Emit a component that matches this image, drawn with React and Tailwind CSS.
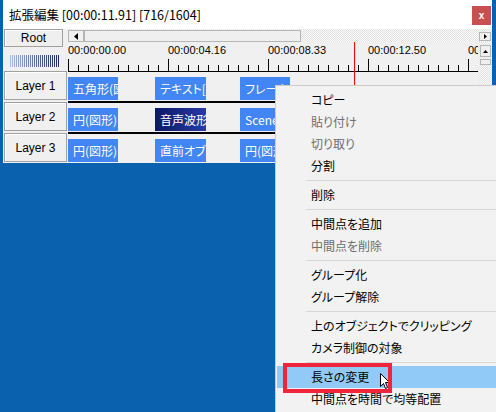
import React from 'react';

const jp = "font-['Noto_Sans_CJK_JP','Noto_Sans',sans-serif] [font-feature-settings:'palt']";
const checker = '[background:repeating-conic-gradient(#e2e2e2_0_25%,#fbfbfb_0_50%)_0_0/2px_2px]';

const layers = [
  ['五角形(図形)', 'テキスト[標準描画]', 'フレームバッファ'],
  ['円(図形)', '音声波形表示', 'Scene'],
  ['円(図形)', '直前オブジェクト', '円(図形)'],
];

const menuItems = [
  { t: 'コピー' },
  { t: '貼り付け', off: true },
  { t: '切り取り', off: true },
  { t: '分割' },
  'sep',
  { t: '削除' },
  'sep',
  { t: '中間点を追加' },
  { t: '中間点を削除', off: true },
  'sep',
  { t: 'グループ化' },
  { t: 'グループ解除' },
  'sep',
  { t: '上のオブジェクトでクリッピング' },
  { t: 'カメラ制御の対象' },
  'sep',
  { t: '長さの変更', hot: true },
  { t: '中間点を時間で均等配置' },
];

const Clip = ({ label, ml, w, selected }) => (
  <div
    className={
      'h-[23px] flex items-center pl-[5px] overflow-hidden whitespace-nowrap text-white text-[12px] ' +
      jp +
      ' ' +
      ml +
      ' ' +
      w +
      ' ' +
      (selected ? 'bg-gradient-to-r from-[#0c1866] to-[#2a3aa6]' : 'bg-[#4285f4]')
    }
  >
    {label}
  </div>
);

const Ruler = () => {
  const ticks = [];
  for (let i = 0; i <= 41; i++) {
    const x = i * 10 + 0.5;
    const major = i % 10 === 0;
    ticks.push(<line key={i} x1={x} x2={x} y1={major ? 0 : 6} y2={12} stroke="#000" strokeWidth="1" />);
  }
  return (
    <svg width="410" height="13" className="block">
      {ticks}
      <line x1="0" x2="410" y1="12.5" y2="12.5" stroke="#000" strokeWidth="1" />
    </svg>
  );
};

const LayerButton = ({ n }) => (
  <div className="ml-[1px] w-[63px] h-[29px] border border-[#a0a0a0] shadow-[inset_1px_1px_0_#fff] bg-[#f0f0f0] flex items-center justify-center text-[12px] text-black font-['Liberation_Sans',sans-serif]">
    Layer {n}
  </div>
);

export default function App() {
  return (
    <div className="relative w-[496px] h-[412px] overflow-hidden bg-[#0a62ae]">
      <div className="ml-[3px] w-[489px] flex flex-col">
        {/* title bar */}
        <div className="h-[29px] bg-white flex items-start justify-between">
          <div className={'mt-[6px] pl-[6px] text-[12.5px] text-black leading-[18px] ' + jp}>
            拡張編集 [00:00:11.91] [716/1604]
          </div>
          <div className="mt-[6px] mr-[1px] w-[19px] h-[19px] bg-[#c75050] flex items-center justify-center text-white text-[10px] font-bold font-['Liberation_Sans',sans-serif] leading-none">
            x
          </div>
        </div>

        {/* body */}
        <div className="h-[134px] bg-[#f0f0f0] flex">
          <div className="w-[65px] flex flex-col">
            <div className="ml-[1px] w-[59px] h-[18px] border border-[#a0a0a0] shadow-[inset_1px_1px_0_#fff] bg-[#efefef] flex items-center justify-center text-[12px] text-black font-['Liberation_Sans',sans-serif]">
              Root
            </div>
            <div className="mt-[8px] ml-[6px] w-[51px] h-[12px] [background:repeating-linear-gradient(90deg,#f0f0f0_0_1px,transparent_1px_2px),linear-gradient(90deg,#a9c1ea,#16235f)]" />
            <div className="mt-[4px] flex flex-col gap-[2px]">
              <LayerButton n={1} />
              <LayerButton n={2} />
              <LayerButton n={3} />
            </div>
          </div>

          <div className="flex-1 flex flex-col">
            {/* horizontal scrollbar */}
            <div className={'h-[13px] flex ' + checker}>
              <div className="w-[16px] h-[12px] mt-[1px] bg-[#f0f0f0] border border-[#b5b5b5] flex items-center justify-center">
                <svg width="4" height="7"><path d="M4 0 L0 3.5 L4 7 Z" fill="#000" /></svg>
              </div>
              <div className="w-[217px] h-[12px] mt-[1px] bg-[#efefef] border border-[#b5b5b5]" />
              <div className="flex-1" />
              <div className="w-[12px] h-[9px] mt-[3px] mr-[1px] bg-[#f0f0f0] border border-[#b5b5b5] flex items-center justify-center">
                <svg width="3" height="5"><path d="M0 0 L3 2.5 L0 5 Z" fill="#000" /></svg>
              </div>
            </div>

            <div className="flex-1 flex">
              <div className="w-[410px] flex flex-col overflow-hidden">
                <div className="h-[17px] flex items-center whitespace-nowrap text-[11px] text-black font-['Liberation_Sans',sans-serif]">
                  <div className="w-[100px] shrink-0">00:00:00.00</div>
                  <div className="w-[100px] shrink-0">00:00:04.16</div>
                  <div className="w-[100px] shrink-0">00:00:08.33</div>
                  <div className="w-[100px] shrink-0">00:00:12.50</div>
                  <div className="w-[100px] shrink-0">00:00:16.66</div>
                </div>
                <Ruler />
                {layers.map((row, i) => (
                  <div
                    key={i}
                    className={'h-[31px] pt-[5px] flex ' + (i < 2 ? 'border-b-2 border-black' : '')}
                  >
                    <Clip label={row[0]} ml="ml-0" w="w-[50px]" />
                    <Clip label={row[1]} ml="ml-[37px]" w="w-[51px]" selected={i === 1} />
                    <Clip label={row[2]} ml="ml-[34px]" w="w-[50px]" />
                  </div>
                ))}
              </div>
              <div className={'w-[14px] flex flex-col ' + checker}>
                <div className="mt-[3px] ml-[2px] w-[11px] h-[12px] bg-[#f0f0f0] border border-[#b5b5b5] flex items-center justify-center">
                  <svg width="5" height="3"><path d="M0 3 L2.5 0 L5 3 Z" fill="#000" /></svg>
                </div>
                <div className="mt-[2px] ml-[2px] w-[11px] h-[6px] bg-[#f0f0f0] border border-[#b5b5b5]" />
              </div>
            </div>
          </div>
        </div>
      </div>

      {/* play cursor */}
      <div className="absolute left-[354px] top-[42px] w-px h-[121px] bg-[#ff0000]" />

      {/* context menu */}
      <div className={'absolute left-[275px] top-[85px] w-[230px] h-[340px] bg-[#f2f2f2] border-l border-t border-[#cccccc] pt-[3px] text-[12px] ' + jp}>
        {menuItems.map((it, i) =>
          it === 'sep' ? (
            <div key={i} className="h-[7px] flex items-center ml-[30px]">
              <div className="w-full h-px bg-[#d7d7d7]" />
            </div>
          ) : (
            <div
              key={i}
              className={
                'h-[22px] ml-[1px] pl-[34px] flex items-center ' +
                (it.off ? 'text-[#6d6d6d] ' : 'text-black ') +
                (it.hot ? 'bg-[#91c9f7]' : '')
              }
            >
              {it.t}
            </div>
          )
        )}
      </div>

      {/* mouse pointer */}
      <svg className="absolute left-[380px] top-[373px]" width="11" height="17" viewBox="0 0 11 17">
        <path d="M0.5 0.5 L0.5 13.5 L3.5 10.5 L5.5 15.5 L7.5 14.5 L5.5 9.5 L9.5 9.5 Z" fill="#fff" stroke="#000" strokeWidth="1" />
      </svg>

      {/* highlight box */}
      <div className="absolute left-[283px] top-[363px] w-[109px] h-[30px] border-4 border-[#f0243a]" />
    </div>
  );
}
